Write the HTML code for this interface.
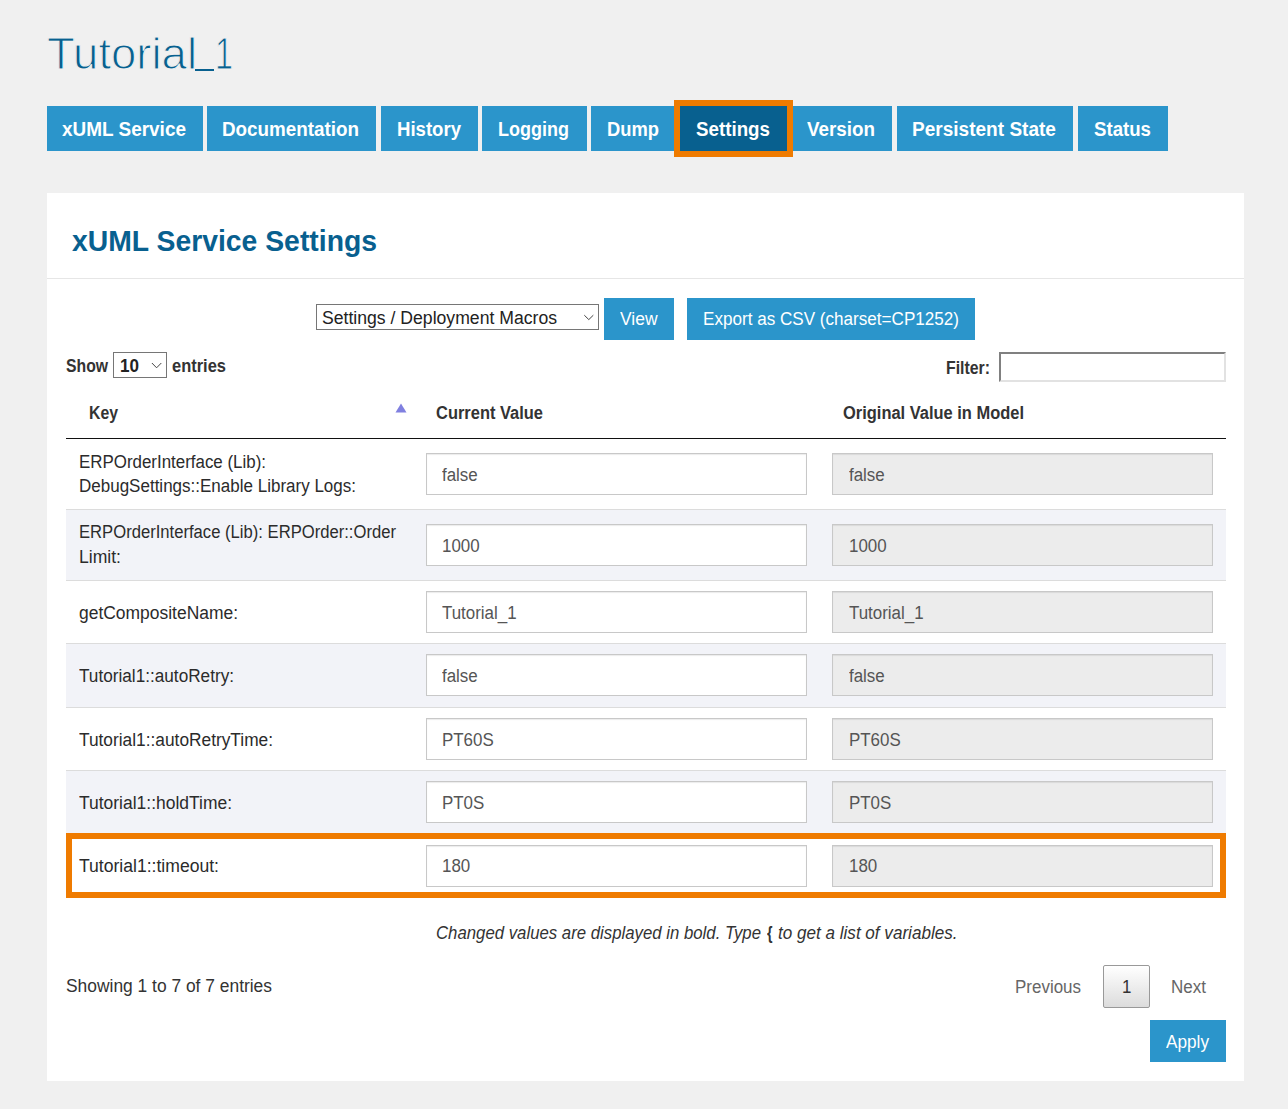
<!DOCTYPE html>
<html><head><meta charset="utf-8"><style>
html,body{margin:0;padding:0;}
body{width:1288px;height:1109px;background:#f0f0f0;position:relative;overflow:hidden;font-family:"Liberation Sans",sans-serif;}
div,span{position:absolute;}
span{white-space:pre;line-height:1;transform-origin:0 0;}
</style></head><body>
<span style="left:47.0px;top:31.41px;font-size:45px;font-weight:400;font-style:normal;color:#08608f;transform:scaleX(1.0109);-webkit-text-stroke:1.1px #f0f0f0;">Tutorial</span>
<div style="left:195px;top:69px;width:19px;height:2px;background:#08608f"></div>
<span style="left:214.6px;top:31.41px;font-size:45px;font-weight:400;font-style:normal;color:#08608f;transform:scaleX(0.7200);-webkit-text-stroke:1.1px #f0f0f0;">1</span>
<div style="left:47px;top:106px;width:156px;height:45px;background:#2b95cb"></div>
<span style="left:62.0px;top:119.61px;font-size:19.6px;font-weight:700;font-style:normal;color:#fff;transform:scaleX(0.9673);">xUML Service</span>
<div style="left:207px;top:106px;width:169px;height:45px;background:#2b95cb"></div>
<span style="left:222.0px;top:119.61px;font-size:19.6px;font-weight:700;font-style:normal;color:#fff;transform:scaleX(0.9605);">Documentation</span>
<div style="left:381px;top:106px;width:97px;height:45px;background:#2b95cb"></div>
<span style="left:396.5px;top:119.61px;font-size:19.6px;font-weight:700;font-style:normal;color:#fff;transform:scaleX(0.9478);">History</span>
<div style="left:482px;top:106px;width:105px;height:45px;background:#2b95cb"></div>
<span style="left:498.0px;top:119.61px;font-size:19.6px;font-weight:700;font-style:normal;color:#fff;transform:scaleX(0.9188);">Logging</span>
<div style="left:591px;top:106px;width:85px;height:45px;background:#2b95cb"></div>
<span style="left:606.5px;top:119.61px;font-size:19.6px;font-weight:700;font-style:normal;color:#fff;transform:scaleX(0.9365);">Dump</span>
<div style="left:680px;top:106px;width:107px;height:45px;background:#08608f"></div>
<span style="left:695.5px;top:119.61px;font-size:19.6px;font-weight:700;font-style:normal;color:#fff;transform:scaleX(0.9571);">Settings</span>
<div style="left:792px;top:106px;width:100px;height:45px;background:#2b95cb"></div>
<span style="left:807.0px;top:119.61px;font-size:19.6px;font-weight:700;font-style:normal;color:#fff;transform:scaleX(0.9603);">Version</span>
<div style="left:897px;top:106px;width:176px;height:45px;background:#2b95cb"></div>
<span style="left:912.0px;top:119.61px;font-size:19.6px;font-weight:700;font-style:normal;color:#fff;transform:scaleX(0.9720);">Persistent State</span>
<div style="left:1078px;top:106px;width:90px;height:45px;background:#2b95cb"></div>
<span style="left:1093.5px;top:119.61px;font-size:19.6px;font-weight:700;font-style:normal;color:#fff;transform:scaleX(0.9516);">Status</span>
<div style="left:674px;top:100px;width:119px;height:57px;border:6px solid #ef7b00;box-sizing:border-box"></div>
<div style="left:47px;top:193px;width:1197px;height:888px;background:#fff"></div>
<div style="left:47px;top:278px;width:1197px;height:1px;background:#e6e6e6"></div>
<span style="left:72.0px;top:225.60px;font-size:30px;font-weight:700;font-style:normal;color:#08608f;transform:scaleX(0.9446);">xUML Service Settings</span>
<div style="left:316px;top:304px;width:283px;height:26px;border:1px solid #767676;box-sizing:border-box;background:#fff"></div>
<span style="left:322.0px;top:308.76px;font-size:18px;font-weight:400;font-style:normal;color:#222;transform:scaleX(0.9787);">Settings / Deployment Macros</span>
<svg style="position:absolute;left:583px;top:313px" width="12" height="9" viewBox="0 0 12 9"><path d="M1.3 2.2 L5.8 6.6 L10.3 2.2" fill="none" stroke="#444" stroke-width="1"/></svg>
<div style="left:604px;top:298px;width:70px;height:42px;background:#2b95cb"></div>
<span style="left:619.8px;top:309.76px;font-size:18px;font-weight:400;font-style:normal;color:#fff;transform:scaleX(0.9693);">View</span>
<div style="left:687px;top:298px;width:288px;height:42px;background:#2b95cb"></div>
<span style="left:703.3px;top:309.76px;font-size:18px;font-weight:400;font-style:normal;color:#fff;transform:scaleX(0.9495);">Export as CSV (charset=CP1252)</span>
<span style="left:66.0px;top:356.76px;font-size:18px;font-weight:700;font-style:normal;color:#333;transform:scaleX(0.8750);">Show</span>
<div style="left:113px;top:352px;width:54px;height:26px;border:1px solid #767676;box-sizing:border-box;background:#fff"></div>
<span style="left:120.0px;top:356.76px;font-size:18px;font-weight:700;font-style:normal;color:#222;transform:scaleX(0.9490);">10</span>
<svg style="position:absolute;left:151px;top:361px" width="11" height="9" viewBox="0 0 11 9"><path d="M0.9 2 L5.6 6.8 L10.3 2" fill="none" stroke="#444" stroke-width="1"/></svg>
<span style="left:172.0px;top:356.76px;font-size:18px;font-weight:700;font-style:normal;color:#333;transform:scaleX(0.9148);">entries</span>
<span style="left:945.6px;top:358.76px;font-size:18px;font-weight:700;font-style:normal;color:#333;transform:scaleX(0.8800);">Filter:</span>
<div style="left:999px;top:352px;width:227px;height:30px;border-style:solid;border-width:2px;border-color:#808080 #e2e2e2 #e2e2e2 #808080;box-sizing:border-box;background:#fff"></div>
<span style="left:89.0px;top:403.76px;font-size:18px;font-weight:700;font-style:normal;color:#333;transform:scaleX(0.8782);">Key</span>
<svg style="position:absolute;left:395px;top:403px" width="12" height="10" viewBox="0 0 12 10"><path d="M0.5 9.5 L6 0.5 L11.5 9.5 Z" fill="#8080e0"/></svg>
<span style="left:436.0px;top:403.76px;font-size:18px;font-weight:700;font-style:normal;color:#333;transform:scaleX(0.9142);">Current Value</span>
<span style="left:843.0px;top:403.76px;font-size:18px;font-weight:700;font-style:normal;color:#333;transform:scaleX(0.9139);">Original Value in Model</span>
<div style="left:66px;top:438px;width:1160px;height:1px;background:#111"></div>
<div style="left:66px;top:509px;width:1160px;height:1px;background:#dcdcdc"></div>
<span style="left:78.5px;top:452.76px;font-size:18px;font-weight:400;font-style:normal;color:#2b2b2b;transform:scaleX(0.9393);">ERPOrderInterface (Lib):</span>
<span style="left:78.5px;top:477.46px;font-size:18px;font-weight:400;font-style:normal;color:#2b2b2b;transform:scaleX(0.9448);">DebugSettings::Enable Library Logs:</span>
<div style="left:426px;top:453px;width:381px;height:42px;border:1px solid #c8c8c8;box-sizing:border-box;background:#fff;box-shadow:inset 0 1px 1px rgba(0,0,0,.08)"></div>
<div style="left:832px;top:453px;width:381px;height:42px;border:1px solid #c8c8c8;box-sizing:border-box;background:#ececec;box-shadow:inset 0 1px 1px rgba(0,0,0,.08)"></div>
<span style="left:442.0px;top:465.76px;font-size:18px;font-weight:400;font-style:normal;color:#555;transform:scaleX(0.9400);">false</span>
<span style="left:848.5px;top:465.76px;font-size:18px;font-weight:400;font-style:normal;color:#555;transform:scaleX(0.9400);">false</span>
<div style="left:66px;top:510px;width:1160px;height:70px;background:#f2f3f8"></div>
<div style="left:66px;top:580px;width:1160px;height:1px;background:#dcdcdc"></div>
<span style="left:78.5px;top:523.26px;font-size:18px;font-weight:400;font-style:normal;color:#2b2b2b;transform:scaleX(0.9239);">ERPOrderInterface (Lib): ERPOrder::Order</span>
<span style="left:78.5px;top:548.46px;font-size:18px;font-weight:400;font-style:normal;color:#2b2b2b;transform:scaleX(0.9766);">Limit:</span>
<div style="left:426px;top:524px;width:381px;height:42px;border:1px solid #c8c8c8;box-sizing:border-box;background:#fff;box-shadow:inset 0 1px 1px rgba(0,0,0,.08)"></div>
<div style="left:832px;top:524px;width:381px;height:42px;border:1px solid #c8c8c8;box-sizing:border-box;background:#ececec;box-shadow:inset 0 1px 1px rgba(0,0,0,.08)"></div>
<span style="left:442.0px;top:536.76px;font-size:18px;font-weight:400;font-style:normal;color:#555;transform:scaleX(0.9400);">1000</span>
<span style="left:848.5px;top:536.76px;font-size:18px;font-weight:400;font-style:normal;color:#555;transform:scaleX(0.9400);">1000</span>
<div style="left:66px;top:643px;width:1160px;height:1px;background:#dcdcdc"></div>
<span style="left:78.5px;top:603.76px;font-size:18px;font-weight:400;font-style:normal;color:#2b2b2b;transform:scaleX(0.9691);">getCompositeName:</span>
<div style="left:426px;top:591px;width:381px;height:42px;border:1px solid #c8c8c8;box-sizing:border-box;background:#fff;box-shadow:inset 0 1px 1px rgba(0,0,0,.08)"></div>
<div style="left:832px;top:591px;width:381px;height:42px;border:1px solid #c8c8c8;box-sizing:border-box;background:#ececec;box-shadow:inset 0 1px 1px rgba(0,0,0,.08)"></div>
<span style="left:442.0px;top:603.76px;font-size:18px;font-weight:400;font-style:normal;color:#555;transform:scaleX(0.9400);">Tutorial_1</span>
<span style="left:848.5px;top:603.76px;font-size:18px;font-weight:400;font-style:normal;color:#555;transform:scaleX(0.9400);">Tutorial_1</span>
<div style="left:66px;top:644px;width:1160px;height:63px;background:#f2f3f8"></div>
<div style="left:66px;top:707px;width:1160px;height:1px;background:#dcdcdc"></div>
<span style="left:78.5px;top:667.26px;font-size:18px;font-weight:400;font-style:normal;color:#2b2b2b;transform:scaleX(0.9544);">Tutorial1::autoRetry:</span>
<div style="left:426px;top:654px;width:381px;height:42px;border:1px solid #c8c8c8;box-sizing:border-box;background:#fff;box-shadow:inset 0 1px 1px rgba(0,0,0,.08)"></div>
<div style="left:832px;top:654px;width:381px;height:42px;border:1px solid #c8c8c8;box-sizing:border-box;background:#ececec;box-shadow:inset 0 1px 1px rgba(0,0,0,.08)"></div>
<span style="left:442.0px;top:667.26px;font-size:18px;font-weight:400;font-style:normal;color:#555;transform:scaleX(0.9400);">false</span>
<span style="left:848.5px;top:667.26px;font-size:18px;font-weight:400;font-style:normal;color:#555;transform:scaleX(0.9400);">false</span>
<div style="left:66px;top:770px;width:1160px;height:1px;background:#dcdcdc"></div>
<span style="left:78.5px;top:730.76px;font-size:18px;font-weight:400;font-style:normal;color:#2b2b2b;transform:scaleX(0.9616);">Tutorial1::autoRetryTime:</span>
<div style="left:426px;top:718px;width:381px;height:42px;border:1px solid #c8c8c8;box-sizing:border-box;background:#fff;box-shadow:inset 0 1px 1px rgba(0,0,0,.08)"></div>
<div style="left:832px;top:718px;width:381px;height:42px;border:1px solid #c8c8c8;box-sizing:border-box;background:#ececec;box-shadow:inset 0 1px 1px rgba(0,0,0,.08)"></div>
<span style="left:442.0px;top:730.76px;font-size:18px;font-weight:400;font-style:normal;color:#555;transform:scaleX(0.9400);">PT60S</span>
<span style="left:848.5px;top:730.76px;font-size:18px;font-weight:400;font-style:normal;color:#555;transform:scaleX(0.9400);">PT60S</span>
<div style="left:66px;top:771px;width:1160px;height:62px;background:#f2f3f8"></div>
<span style="left:78.5px;top:793.76px;font-size:18px;font-weight:400;font-style:normal;color:#2b2b2b;transform:scaleX(0.9700);">Tutorial1::holdTime:</span>
<div style="left:426px;top:781px;width:381px;height:42px;border:1px solid #c8c8c8;box-sizing:border-box;background:#fff;box-shadow:inset 0 1px 1px rgba(0,0,0,.08)"></div>
<div style="left:832px;top:781px;width:381px;height:42px;border:1px solid #c8c8c8;box-sizing:border-box;background:#ececec;box-shadow:inset 0 1px 1px rgba(0,0,0,.08)"></div>
<span style="left:442.0px;top:793.76px;font-size:18px;font-weight:400;font-style:normal;color:#555;transform:scaleX(0.9400);">PT0S</span>
<span style="left:848.5px;top:793.76px;font-size:18px;font-weight:400;font-style:normal;color:#555;transform:scaleX(0.9400);">PT0S</span>
<span style="left:78.5px;top:857.26px;font-size:18px;font-weight:400;font-style:normal;color:#2b2b2b;transform:scaleX(0.9763);">Tutorial1::timeout:</span>
<div style="left:426px;top:845px;width:381px;height:42px;border:1px solid #c8c8c8;box-sizing:border-box;background:#fff;box-shadow:inset 0 1px 1px rgba(0,0,0,.08)"></div>
<div style="left:832px;top:845px;width:381px;height:42px;border:1px solid #c8c8c8;box-sizing:border-box;background:#ececec;box-shadow:inset 0 1px 1px rgba(0,0,0,.08)"></div>
<span style="left:442.0px;top:857.26px;font-size:18px;font-weight:400;font-style:normal;color:#555;transform:scaleX(0.9400);">180</span>
<span style="left:848.5px;top:857.26px;font-size:18px;font-weight:400;font-style:normal;color:#555;transform:scaleX(0.9400);">180</span>
<div style="left:66px;top:833px;width:1160px;height:65px;border:6px solid #ef7b00;box-sizing:border-box"></div>
<span style="left:436.0px;top:923.76px;font-size:18px;font-weight:400;font-style:italic;color:#333;transform:scaleX(0.9315);">Changed values are displayed in bold. Type</span>
<span style="left:767.0px;top:923.76px;font-size:18px;font-weight:700;font-style:normal;color:#333;transform:scaleX(0.7852);">{</span>
<span style="left:777.6px;top:923.76px;font-size:18px;font-weight:400;font-style:italic;color:#333;transform:scaleX(0.9492);">to get a list of variables.</span>
<span style="left:66.0px;top:976.76px;font-size:18px;font-weight:400;font-style:normal;color:#333;transform:scaleX(0.9665);">Showing 1 to 7 of 7 entries</span>
<span style="left:1015.3px;top:977.76px;font-size:18px;font-weight:400;font-style:normal;color:#666;transform:scaleX(0.9424);">Previous</span>
<div style="left:1103px;top:965px;width:47px;height:43px;border:1px solid #999;border-radius:2px;box-sizing:border-box;background:linear-gradient(#fff,#dcdcdc)"></div>
<span style="left:1122.0px;top:977.76px;font-size:18px;font-weight:400;font-style:normal;color:#333;transform:scaleX(0.9400);">1</span>
<span style="left:1171.4px;top:977.76px;font-size:18px;font-weight:400;font-style:normal;color:#666;transform:scaleX(0.9457);">Next</span>
<div style="left:1150px;top:1020px;width:76px;height:42px;background:#2b95cb"></div>
<span style="left:1166.4px;top:1032.76px;font-size:18px;font-weight:400;font-style:normal;color:#fff;transform:scaleX(0.9550);">Apply</span>
</body></html>
